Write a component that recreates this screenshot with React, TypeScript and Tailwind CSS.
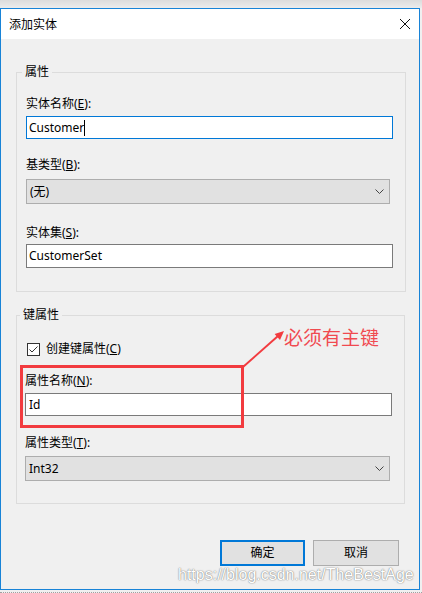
import React from 'react';

const Chevron: React.FC = () => (
  <svg width="9" height="5" viewBox="0 0 9 5" className="shrink-0">
    <polyline points="0.5,0.5 4.5,4.5 8.5,0.5" fill="none" stroke="#444" strokeWidth="1" />
  </svg>
);

// 组合框
const Combo: React.FC<{ value: string; width: string; className?: string }> = ({ value, width, className }) => (
  <div
    className={`${width} ${className ?? ''} h-[25px] border border-[#adadad] bg-[#e1e1e1] flex items-center justify-between pl-[3px] pr-[5px]`}
  >
    <span>{value}</span>
    <Chevron />
  </div>
);

const App: React.FC = () => {
  return (
    <div className="relative w-[422px] h-[593px] bg-[#f0f0f0] text-[12px] leading-[16px] text-black font-['Noto_Sans','Noto_Sans_CJK_SC',sans-serif]">
      {/* window shadow strip */}
      <div className="h-[8px] bg-linear-to-b from-[#dcdcdc] to-[#ececec]" />

      <div className="w-[420px] h-[582px] border border-[#1883d7] bg-[#f0f0f0] flex flex-col">
        {/* title bar */}
        <div className="h-[30px] bg-white flex items-center justify-between pl-[8px] pr-[9px]">
          <span className="font-['Noto_Sans_CJK_SC',sans-serif]">添加实体</span>
          <svg width="10" height="10" viewBox="0 0 10 10">
            <line x1="0" y1="0" x2="10" y2="10" stroke="#111" strokeWidth="1" />
            <line x1="10" y1="0" x2="0" y2="10" stroke="#111" strokeWidth="1" />
          </svg>
        </div>

        <div className="flex-1 pl-[15px] flex flex-col">
          {/* 属性 */}
          <fieldset className="mt-[25px] w-[390px] border border-[#dcdcdc] pl-[9px] pb-[23px]">
            <legend className="ml-[-4px] px-[3px]">属性</legend>
            <div className="mt-[16px]">
              实体名称(<u>E</u>):
            </div>
            <div className="mt-[4px] h-[23px] w-[367px] border border-[#0078d7] bg-white flex items-center pl-[2px]">
              <span>Customer</span>
              <span className="inline-block w-px h-[16px] bg-black" />
            </div>
            <div className="mt-[18px]">
              基类型(<u>B</u>):
            </div>
            <Combo value="(无)" width="w-[364px]" className="mt-[6px]" />
            <div className="mt-[21px]">
              实体集(<u>S</u>):
            </div>
            <div className="mt-[3px] h-[24px] w-[367px] border border-[#7a7a7a] bg-white flex items-center pl-[2px]">
              CustomerSet
            </div>
          </fieldset>

          {/* 键属性 */}
          <fieldset className="mt-[15px] w-[389px] border border-[#dcdcdc] pl-[8px] pb-[22px]">
            <legend className="ml-[-5px] px-[3px]">键属性</legend>
            <div className="mt-[18px] h-[16px] flex items-center">
              <div className="ml-[2px] w-[13px] h-[13px] border border-[#333] bg-white flex items-center justify-center">
                <svg width="11" height="11" viewBox="0 0 11 11">
                  <polyline points="1.5,5.5 4,8 9.5,2.5" fill="none" stroke="#333" strokeWidth="1" />
                </svg>
              </div>
              <span className="ml-[6px]">
                创建键属性(<u>C</u>)
              </span>
            </div>
            <div className="mt-[16px]">
              属性名称(<u>N</u>):
            </div>
            <div className="mt-[4px] h-[23px] w-[367px] border border-[#7a7a7a] bg-white flex items-center pl-[3px]">
              Id
            </div>
            <div className="mt-[19px]">
              属性类型(<u>T</u>):
            </div>
            <Combo value="Int32" width="w-[365px]" className="mt-[5px]" />
          </fieldset>

          <div className="mt-[36px] mr-[20px] flex justify-end gap-[8px]">
            <button className="w-[85px] h-[26px] border-2 border-[#0078d7] bg-[#e1e1e1] flex items-center justify-center">
              确定
            </button>
            <button className="w-[86px] h-[26px] border border-[#adadad] bg-[#e1e1e1] flex items-center justify-center">
              取消
            </button>
          </div>
        </div>
      </div>

      <div className="mt-[2px] border-t border-dotted border-[#a0a0a0]" />

      {/* annotation: red box, arrow, note */}
      <div className="absolute left-[20px] top-[365px] w-[224px] h-[63px] border-[3px] border-[#f23b3f]" />
      <svg className="absolute left-[240px] top-[328px]" width="50" height="42" viewBox="0 0 50 42">
        <line x1="3" y1="39" x2="38" y2="8" stroke="#f23b3f" strokeWidth="2" />
        <polygon points="44,3 40,12 34.6,6" fill="#f23b3f" />
      </svg>
      <div className="absolute left-[284px] top-[326px] text-[19px] leading-[22px] text-[#f04a50] font-['Noto_Sans_CJK_SC',sans-serif]">
        必须有主键
      </div>

      {/* watermark */}
      <div className="absolute left-[178px] top-[566px] text-[16px] leading-[18px] text-white font-['Liberation_Sans',sans-serif] [text-shadow:0_0_1px_rgba(0,0,0,0.55),0_0_2px_rgba(0,0,0,0.25)]">
        https://blog.csdn.net/TheBestAge
      </div>
    </div>
  );
};

export default App;
